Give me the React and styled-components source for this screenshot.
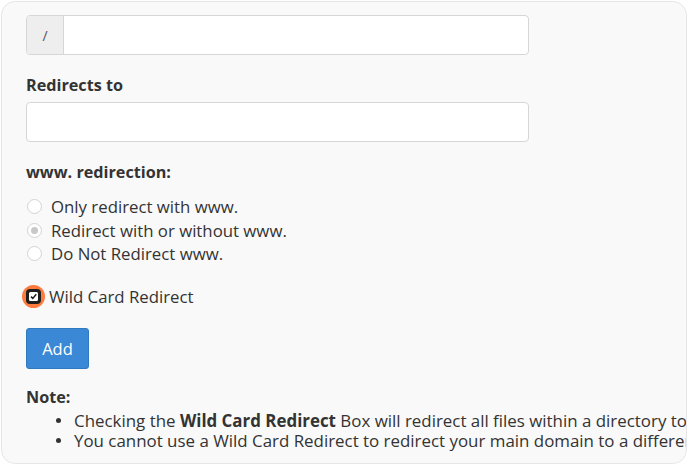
import React from 'react';
import styled, { createGlobalStyle } from 'styled-components';

const Global = createGlobalStyle`
  html, body { margin: 0; padding: 0; background: #fff; }
  body {
    font-family: "Open Sans", "Liberation Sans", sans-serif;
    color: #333;
  }
`;

const Card = styled.div`
  box-sizing: border-box;
  width: 686px;
  height: 463px;
  margin: 1px 0 0 1px;
  border: 1px solid #e6e6e6;
  border-radius: 14px;
  background: #f9f9f9;
  padding: 13px 24px 0;
  overflow: hidden;
`;

const InputGroup = styled.div`
  display: flex;
  width: 503px;
  height: 40px;
  box-sizing: border-box;
  border: 1px solid #d6d6d6;
  border-radius: 4px;
  background: #fff;
  overflow: hidden;
`;

const Addon = styled.span`
  width: 36px;
  display: flex;
  align-items: center;
  justify-content: center;
  background: #eee;
  border-right: 1px solid #d6d6d6;
  font-size: 14px;
  color: #555;
`;

const Field = styled.input`
  flex: 1;
  border: 0;
  outline: none;
  background: transparent;
`;

const Label = styled.div`
  font-weight: 700;
  font-size: 16.2px;
  margin: ${(p) => p.$top || 0}px 0 ${(p) => p.$bottom || 0}px;
  line-height: 22px;
`;

const Options = styled.div`
  display: flex;
  flex-direction: column;
  margin-top: 12px;
`;

const Option = styled.label`
  display: flex;
  align-items: center;
  gap: 9px;
  height: 23.5px;
  font-size: 16.8px;
  color: #333;
`;

const Radio = styled.span`
  width: 13px;
  height: 13px;
  margin-left: 1px;
  border-radius: 50%;
  border: 1px solid #d3d3d3;
  background: #fff;
  position: relative;
  &::after {
    content: '';
    display: ${(p) => (p.$checked ? 'block' : 'none')};
    position: absolute;
    inset: 3px;
    border-radius: 50%;
    background: #c8c8c8;
  }
`;

const CheckRow = styled(Option)`
  margin-top: 19px;
  height: 24px;
  gap: 4px;
`;

const Ring = styled.span`
  box-sizing: border-box;
  width: 23px;
  height: 23px;
  margin-left: -4px;
  border-radius: 50%;
  background: #ff7a3d;
  display: flex;
  align-items: center;
  justify-content: center;
`;

const Check = styled.span`
  width: 15px;
  height: 15px;
  border-radius: 4px;
  background: #1e1e1e;
  display: flex;
  align-items: center;
  justify-content: center;
`;

const Button = styled.button`
  margin-top: 19px;
  width: 63px;
  height: 41px;
  border: 1px solid #2f79c0;
  border-radius: 3px;
  background: #3a88d6;
  color: #fff;
  font-family: inherit;
  font-size: 16.5px;
`;

const Notes = styled.ul`
  margin: 3px 0 0;
  padding-left: 30px;
  list-style: none;
  font-size: 16.9px;
  line-height: 20px;
  white-space: nowrap;
  li::before {
    content: '';
    display: inline-block;
    width: 5px;
    height: 5px;
    border-radius: 50%;
    background: #333;
    margin: 0 13px 0 0;
    vertical-align: middle;
    position: relative;
    top: -1px;
  }
`;

export default function App() {
  return (
    <>
      <Global />
      <Card>
        <InputGroup>
          <Addon>/</Addon>
          <Field />
        </InputGroup>
        <Label $top={19} $bottom={6}>Redirects to</Label>
        <InputGroup>
          <Field />
        </InputGroup>
        <Label $top={19}>www. redirection:</Label>
        <Options>
          <Option><Radio />Only redirect with www.</Option>
          <Option><Radio $checked />Redirect with or without www.</Option>
          <Option><Radio />Do Not Redirect www.</Option>
        </Options>
        <CheckRow>
          <Ring>
            <Check>
              <svg width="11" height="11" viewBox="0 0 11 11">
                <rect x="1" y="1" width="9" height="9" rx="1.5" fill="#fff" />
                <path d="M3 5.6 L4.8 7.4 L8.3 3.3" stroke="#1e1e1e" strokeWidth="1.5" fill="none" />
              </svg>
            </Check>
          </Ring>
          Wild Card Redirect
        </CheckRow>
        <Button>Add</Button>
        <Label $top={17}>Note:</Label>
        <Notes>
          <li>Checking the <b>Wild Card Redirect</b> Box will redirect all files within a directory to the same filename in the redirected directory.</li>
          <li>You cannot use a Wild Card Redirect to redirect your main domain to a different directory on your site.</li>
        </Notes>
      </Card>
    </>
  );
}
